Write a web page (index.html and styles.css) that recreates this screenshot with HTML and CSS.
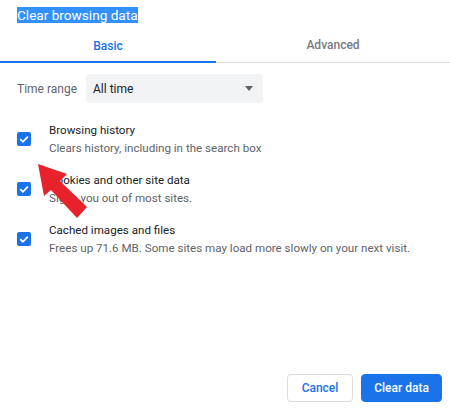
FILE: index.html
```html
<!DOCTYPE html>
<html>
<head>
<meta charset="utf-8">
<link rel="stylesheet" href="styles.css">
</head>
<body>
<div class="dialog">
  <div class="title"><span class="sel">Clear browsing data</span></div>
  <div class="tabs">
    <div class="tab active">Basic</div>
    <div class="tab">Advanced</div>
  </div>
  <div class="range">
    <span class="range-label">Time range</span>
    <div class="select">
      <span>All time</span>
      <span class="caret"></span>
    </div>
  </div>
  <div class="items">
    <div class="item">
      <span class="check"><svg viewBox="0 0 14 14" width="14" height="14"><path d="M3.2 7.2 L5.9 9.8 L10.9 4.6" fill="none" stroke="#fff" stroke-width="1.8"/></svg></span>
      <div class="text">
        <div class="primary">Browsing history</div>
        <div class="secondary">Clears history, including in the search box</div>
      </div>
    </div>
    <div class="item">
      <span class="check"><svg viewBox="0 0 14 14" width="14" height="14"><path d="M3.2 7.2 L5.9 9.8 L10.9 4.6" fill="none" stroke="#fff" stroke-width="1.8"/></svg></span>
      <div class="text">
        <div class="primary">Cookies and other site data</div>
        <div class="secondary">Signs you out of most sites.</div>
      </div>
    </div>
    <div class="item">
      <span class="check"><svg viewBox="0 0 14 14" width="14" height="14"><path d="M3.2 7.2 L5.9 9.8 L10.9 4.6" fill="none" stroke="#fff" stroke-width="1.8"/></svg></span>
      <div class="text">
        <div class="primary">Cached images and files</div>
        <div class="secondary">Frees up 71.6 MB. Some sites may load more slowly on your next visit.</div>
      </div>
    </div>
  </div>
  <div class="footer">
    <button class="btn cancel">Cancel</button>
    <button class="btn primary-btn">Clear data</button>
  </div>
  <svg class="arrow" width="450" height="417" viewBox="0 0 450 417">
    <polygon points="38,164 67,174 60,181 87,207 77,218 51,190 44,196" fill="#e8222b"/>
  </svg>
</div>
</body>
</html>
```

FILE: styles.css
```css
html, body {
  margin: 0;
  padding: 0;
  background: #fff;
}
body {
  width: 450px;
  height: 417px;
  overflow: hidden;
  font-family: Roboto, "Noto Sans", "Liberation Sans", sans-serif;
  color: #202124;
}
.dialog {
  position: relative;
  width: 450px;
  height: 417px;
  display: flex;
  flex-direction: column;
}
.title {
  padding: 5px 0 0 17px;
  height: 23px;
  box-sizing: border-box;
}
.sel {
  display: inline-block;
  background: #3390ff;
  color: #fff;
  font-size: 13.6px;
  line-height: 16px;
  height: 16px;
}
.tabs {
  display: flex;
  margin-top: 5px;
  border-bottom: 1px solid #e0e0e0;
}
.tab {
  height: 34px;
  line-height: 34px;
  text-align: center;
  font-size: 12px;
  font-weight: 500;
  color: #777b80;
  flex: 1;
}
.tab.active {
  flex: 0 0 216px;
  color: #1a73e8;
  box-shadow: inset 0 -2px 0 #1a73e8;
  position: relative;
  top: 1px;
}
.range {
  display: flex;
  align-items: center;
  padding: 11px 0 0 17px;
}
.range-label {
  width: 69px;
  font-size: 12px;
  color: #5f6368;
}
.select {
  width: 177px;
  height: 29px;
  box-sizing: border-box;
  background: #f1f3f4;
  border-radius: 4px;
  padding: 0 7px;
  display: flex;
  align-items: center;
  justify-content: space-between;
  font-size: 12px;
  color: #202124;
}
.caret {
  width: 0;
  height: 0;
  border-left: 4.5px solid transparent;
  border-right: 4.5px solid transparent;
  border-top: 5px solid #5f6368;
  margin-right: 3px;
}
.items {
  flex: 1;
  padding-top: 11px;
}
.item {
  height: 50px;
  display: flex;
  align-items: center;
  padding-left: 17px;
}
.check {
  width: 14px;
  height: 14px;
  border-radius: 2px;
  background: #1a73e8;
  display: flex;
  flex: 0 0 14px;
}
.text {
  margin-left: 18px;
  font-size: 11.6px;
  line-height: 18px;
}
.primary {
  color: #202124;
}
.secondary {
  color: #5f6368;
}
.footer {
  display: flex;
  justify-content: flex-end;
  gap: 8px;
  padding: 0 8px 15px 0;
}
.btn {
  height: 28px;
  border-radius: 4px;
  font-family: Roboto, "Noto Sans", "Liberation Sans", sans-serif;
  font-size: 12px;
  font-weight: 500;
  padding: 0;
  cursor: pointer;
}
.cancel {
  width: 66px;
  background: #fff;
  color: #1a73e8;
  border: 1px solid #dadce0;
}
.primary-btn {
  width: 81px;
  background: #1a73e8;
  color: #fff;
  border: 1px solid #1a73e8;
}
.arrow {
  position: absolute;
  left: 0;
  top: 0;
  pointer-events: none;
}
```
